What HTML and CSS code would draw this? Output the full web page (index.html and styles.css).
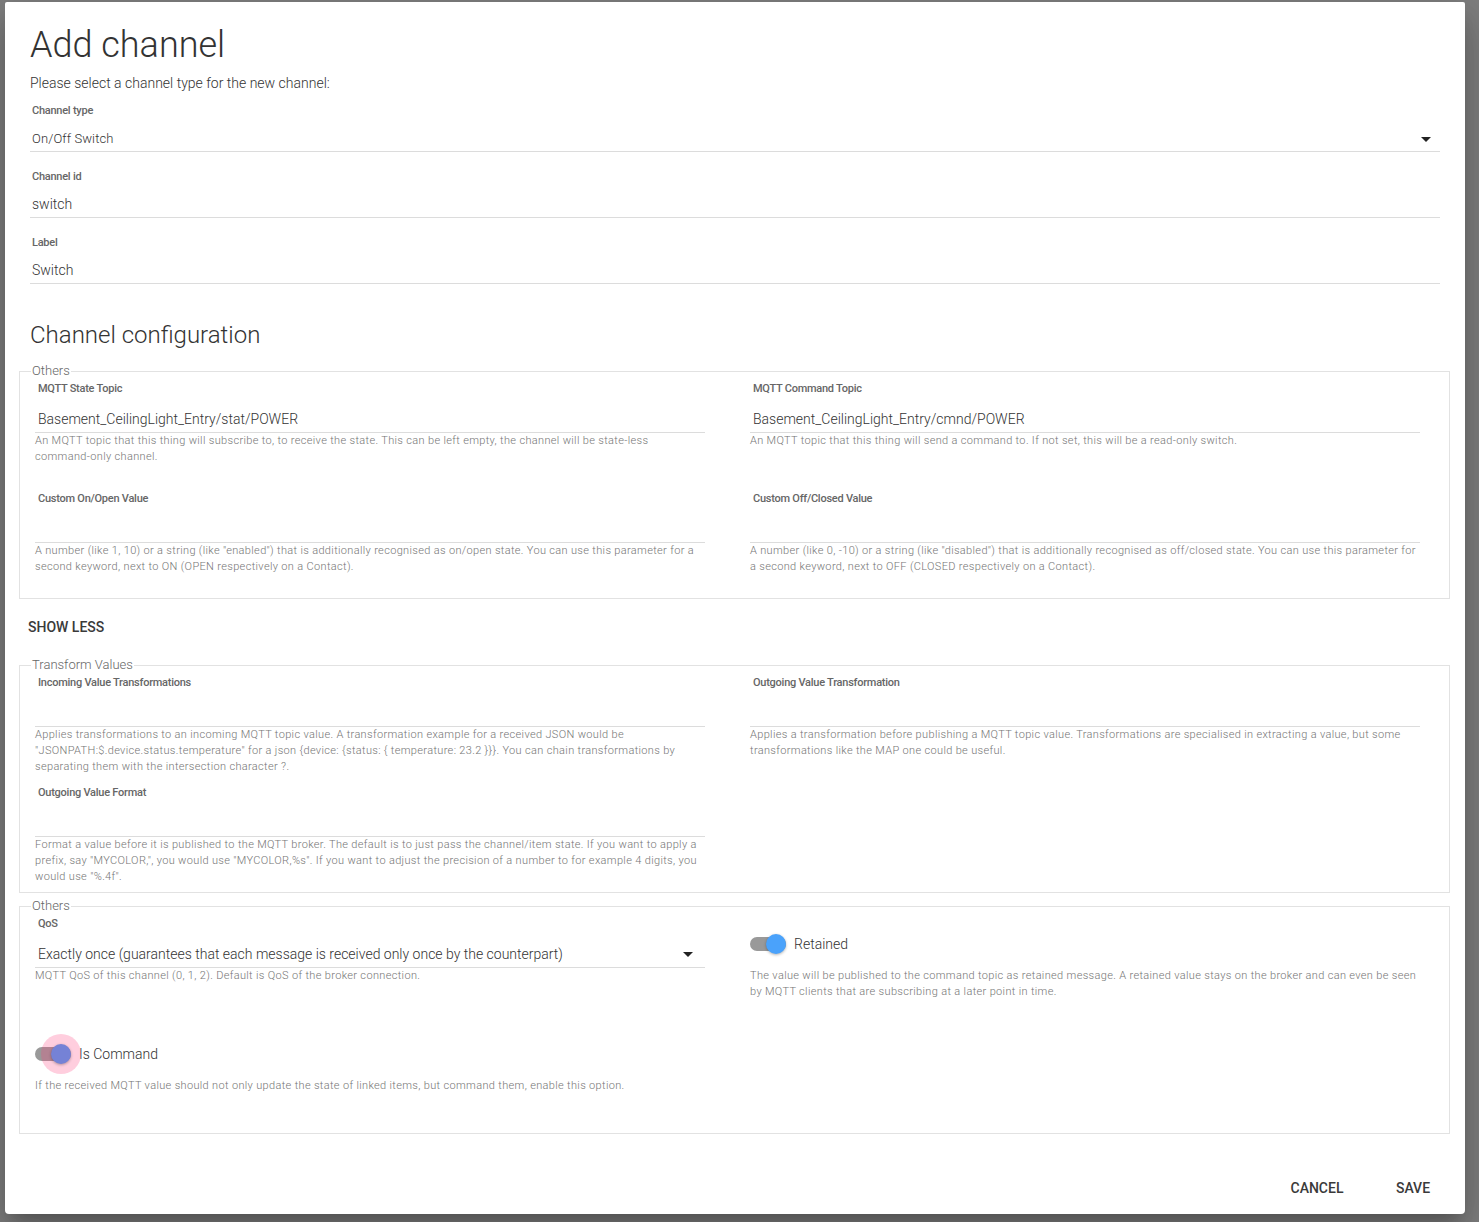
FILE: index.html
```html
<!DOCTYPE html>
<html lang="en">
<head>
<meta charset="utf-8">
<title>Add channel</title>
<link rel="stylesheet" href="styles.css">
</head>
<body>
<div class="dialog">
  <h1 class="title">Add channel</h1>
  <p class="intro">Please select a channel type for the new channel:</p>

  <div class="field first">
    <div class="label">Channel type</div>
    <div class="input select"><span class="sel-val">On/Off Switch</span><svg class="arrow" width="10" height="5" viewBox="0 0 10 5"><path d="M0 0H10L5 5Z"/></svg></div>
  </div>
  <div class="field">
    <div class="label">Channel id</div>
    <div class="input">switch</div>
  </div>
  <div class="field">
    <div class="label">Label</div>
    <div class="input">Switch</div>
  </div>

  <h2 class="section">Channel configuration</h2>

  <fieldset class="group g1">
    <legend>Others</legend>
    <div class="grid">
      <div class="cfg">
        <div class="clabel">MQTT State Topic</div>
        <div class="cinput">Basement_CeilingLight_Entry/stat/POWER</div>
        <div class="help">An MQTT topic that this thing will subscribe to, to receive the state. This can be left empty, the channel will be state-less command-only channel.</div>
      </div>
      <div class="cfg">
        <div class="clabel">MQTT Command Topic</div>
        <div class="cinput">Basement_CeilingLight_Entry/cmnd/POWER</div>
        <div class="help">An MQTT topic that this thing will send a command to. If not set, this will be a read-only switch.</div>
      </div>
      <div class="cfg">
        <div class="clabel">Custom On/Open Value</div>
        <div class="cinput"></div>
        <div class="help">A number (like 1, 10) or a string (like "enabled") that is additionally recognised as on/open state. You can use this parameter for a second keyword, next to ON (OPEN respectively on a Contact).</div>
      </div>
      <div class="cfg">
        <div class="clabel">Custom Off/Closed Value</div>
        <div class="cinput"></div>
        <div class="help">A number (like 0, -10) or a string (like "disabled") that is additionally recognised as off/closed state. You can use this parameter for a second keyword, next to OFF (CLOSED respectively on a Contact).</div>
      </div>
    </div>
  </fieldset>

  <button class="btn show-less">SHOW LESS</button>

  <fieldset class="group g2">
    <legend>Transform Values</legend>
    <div class="grid">
      <div class="cfg">
        <div class="clabel">Incoming Value Transformations</div>
        <div class="cinput"></div>
        <div class="help">Applies transformations to an incoming MQTT topic value. A transformation example for a received JSON would be "JSONPATH:$.device.status.temperature" for a json {device: {status: { temperature: 23.2 }}}. You can chain transformations by separating them with the intersection character ?.</div>
      </div>
      <div class="cfg">
        <div class="clabel">Outgoing Value Transformation</div>
        <div class="cinput"></div>
        <div class="help">Applies a transformation before publishing a MQTT topic value. Transformations are specialised in extracting a value, but some transformations like the MAP one could be useful.</div>
      </div>
      <div class="cfg">
        <div class="clabel">Outgoing Value Format</div>
        <div class="cinput"></div>
        <div class="help">Format a value before it is published to the MQTT broker. The default is to just pass the channel/item state. If you want to apply a prefix, say "MYCOLOR,", you would use "MYCOLOR,%s". If you want to adjust the precision of a number to for example 4 digits, you would use "%.4f".</div>
      </div>
    </div>
  </fieldset>

  <fieldset class="group g3">
    <legend>Others</legend>
    <div class="grid">
      <div class="cfg">
        <div class="clabel">QoS</div>
        <div class="cinput select"><span class="sel-val">Exactly once (guarantees that each message is received only once by the counterpart)</span><svg class="arrow" width="10" height="5" viewBox="0 0 10 5"><path d="M0 0H10L5 5Z"/></svg></div>
        <div class="help">MQTT QoS of this channel (0, 1, 2). Default is QoS of the broker connection.</div>
      </div>
      <div class="cfg">
        <div class="switch-row">
          <span class="track"><span class="thumb blue"></span></span>
          <span class="switch-label">Retained</span>
        </div>
        <div class="help">The value will be published to the command topic as retained message. A retained value stays on the broker and can even be seen by MQTT clients that are subscribing at a later point in time.</div>
      </div>
      <div class="cfg">
        <div class="switch-row">
          <span class="track focused"><span class="ripple"></span><span class="thumb indigo"></span></span>
          <span class="switch-label">Is Command</span>
        </div>
        <div class="help">If the received MQTT value should not only update the state of linked items, but command them, enable this option.</div>
      </div>
    </div>
  </fieldset>

  <div class="actions">
    <button class="btn">CANCEL</button>
    <button class="btn">SAVE</button>
  </div>
</div>
</body>
</html>
```
FILE: styles.css
```css
* { box-sizing: border-box; }
html, body { margin: 0; padding: 0; }
body {
  background: #7f7f7f;
  font-family: Roboto, "Liberation Sans", sans-serif;
  width: 1479px;
  height: 1222px;
  overflow: hidden;
  color: #333;
}
.dialog {
  margin: 2px 0 0 5px;
  width: 1460px;
  height: 1212px;
  background: #fff;
  border-radius: 2px 2px 4px 4px;
  box-shadow: 0 11px 15px -7px rgba(0,0,0,.2), 0 24px 38px 3px rgba(0,0,0,.14), 0 9px 46px 8px rgba(0,0,0,.12);
  display: flex;
  flex-direction: column;
  padding: 23px 25px 8px 25px;
}
.title {
  margin: 0;
  font-size: 36px;
  font-weight: 300;
  line-height: 40px;
  color: #333;
}
.intro {
  margin: 8px 0 0;
  font-size: 14px;
  font-weight: 300;
  line-height: 20px;
  color: #333;
}
.field { margin-bottom: 17px; }
.field.first { margin-top: 10px; }
.label, .clabel {
  font-size: 11px;
  font-weight: 500;
  line-height: 16px;
  letter-spacing: -0.25px;
  color: #666;
}
.label { padding-left: 2px; }
.clabel { padding-left: 3px; }
.input {
  height: 33px;
  padding: 9px 2px 3px;
  line-height: 20px;
  font-size: 14px;
  font-weight: 300;
  color: #333;
  border-bottom: 1px solid #dcdcdc;
}
.select {
  display: flex;
  align-items: center;
  justify-content: space-between;
}
.input.select { font-size: 13px; font-weight: 300; letter-spacing: 0.1px; padding-top: 10px; padding-bottom: 2px; }
.arrow { fill: #222; margin-right: 7px; flex: none; }
.section {
  margin: 18px 0 0;
  font-size: 24px;
  font-weight: 300;
  line-height: 32px;
  color: #333;
}
.group {
  margin: 12px -10px 0 -11px;
  padding: 2px 29px 7px 15px;
  border: 1px solid #e2e2e2;
  min-width: 0;
}
.group legend {
  font-size: 13px;
  font-weight: 300;
  line-height: 16px;
  color: #666;
  padding: 0 1px;
  margin-left: -4px;
}
.g2 { margin-top: 12px; }
.g3 { margin-top: 5px; }
.grid {
  display: grid;
  grid-template-columns: 670px 670px;
  column-gap: 45px;
  row-gap: 10px;
}
.cfg { min-height: 100px; }
.cinput {
  height: 36px;
  padding: 12px 3px 3px;
  line-height: 20px;
  font-size: 14px;
  font-weight: 300;
  color: #333;
  border-bottom: 1px solid #dcdcdc;
}
.cinput .arrow { margin-right: 9px; }
.help {
  font-size: 11px;
  font-weight: 300;
  line-height: 16px;
  letter-spacing: 0.34px;
  color: #757575;
}
.btn {
  height: 36px;
  min-width: 88px;
  padding: 0 8px;
  border: 0;
  background: transparent;
  font-family: Roboto, "Liberation Sans", sans-serif;
  font-size: 14px;
  font-weight: 500;
  color: #3a3a3a;
  cursor: pointer;
}
.show-less {
  align-self: flex-start;
  margin: 10px 0 0 -10px;
}
.switch-row {
  display: flex;
  align-items: center;
  height: 40px;
  margin: 8px 0 4px;
}
.track {
  position: relative;
  width: 36px;
  height: 14px;
  border-radius: 7px;
  background: #999;
  flex: none;
}
.thumb {
  position: absolute;
  right: 0;
  top: -3px;
  width: 20px;
  height: 20px;
  border-radius: 50%;
  box-shadow: 0 1px 3px rgba(0,0,0,.3);
}
.thumb.blue { background: #4aa2fb; }
.thumb.indigo { background: #7582d6; }
.ripple {
  position: absolute;
  right: -10px;
  top: -13px;
  width: 40px;
  height: 40px;
  border-radius: 50%;
  background: rgba(255, 64, 129, 0.26);
}
.switch-label {
  margin-left: 8px;
  font-size: 14px;
  font-weight: 300;
  color: #333;
}
.actions {
  margin-top: auto;
  margin-right: -17px;
  display: flex;
  justify-content: flex-end;
  gap: 8px;
}
```
